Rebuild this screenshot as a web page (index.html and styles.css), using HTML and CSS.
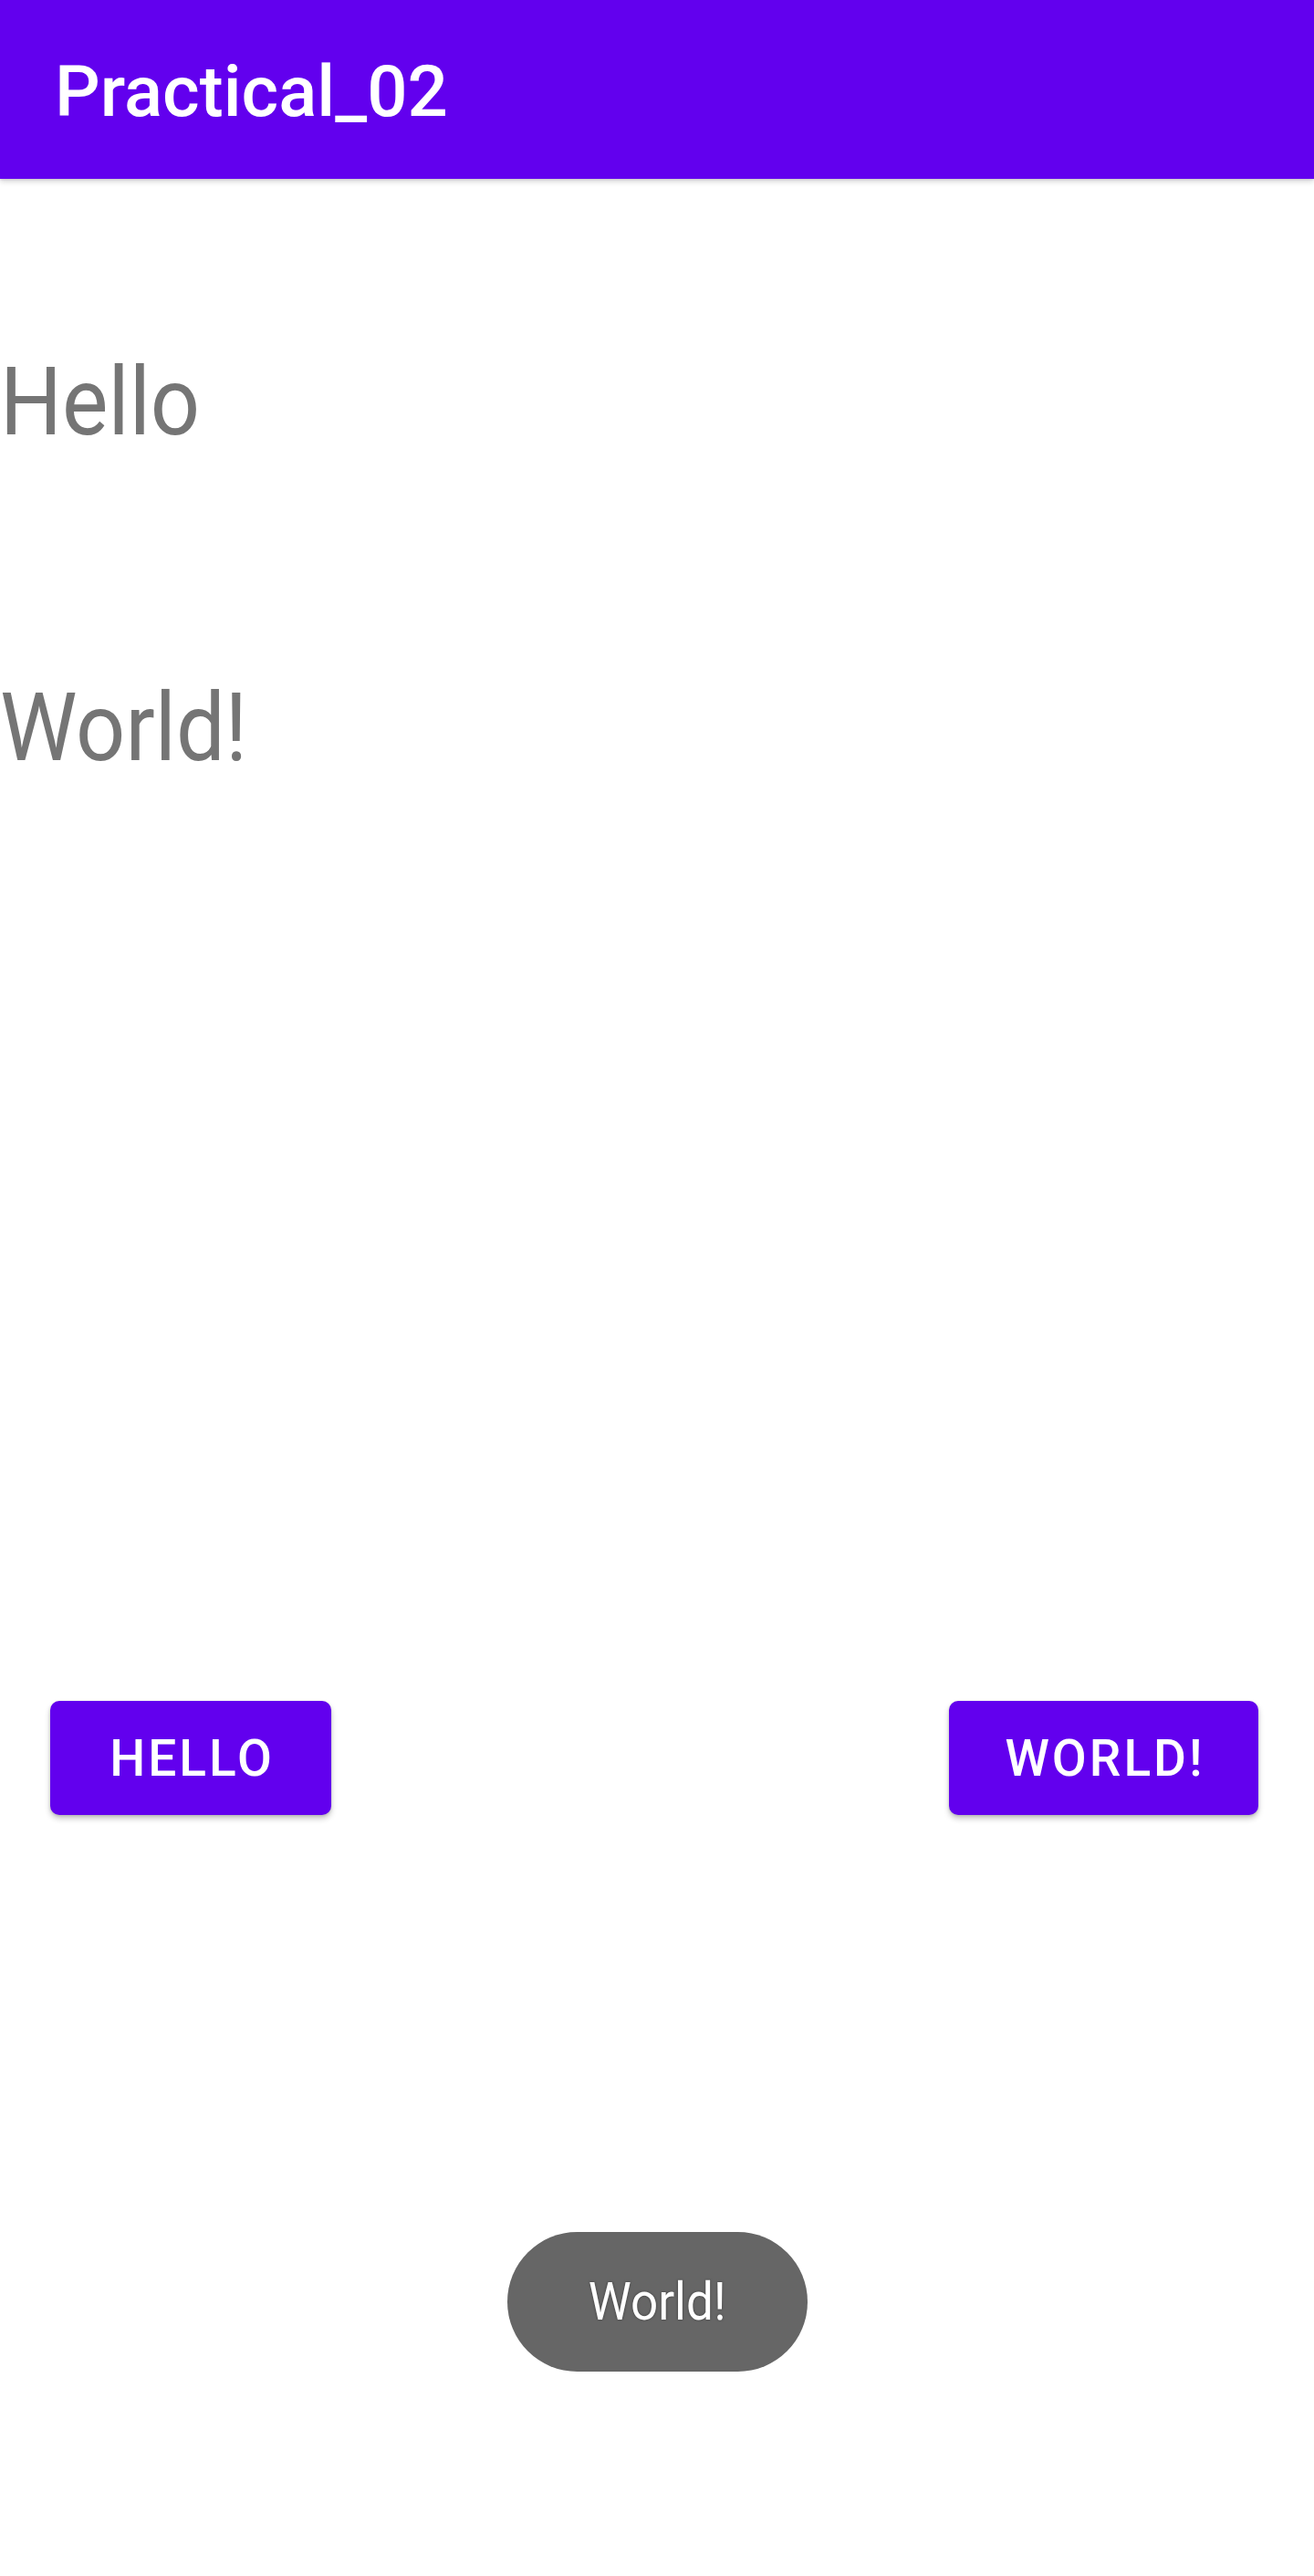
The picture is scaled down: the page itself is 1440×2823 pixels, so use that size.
FILE: index.html
```html
<!DOCTYPE html>
<html>
<head>
<meta charset="utf-8">
<link rel="stylesheet" href="styles.css">
</head>
<body>
<header class="appbar"><span class="title">Practical_02</span></header>
<main class="content">
  <p class="label label-hello"><span class="squeeze">Hello</span></p>
  <p class="label label-world"><span class="squeeze">World!</span></p>
  <div class="buttons">
    <button class="btn btn-hello">Hello</button>
    <button class="btn btn-world">World!</button>
  </div>
  <div class="toast-wrap"><div class="toast"><span class="toast-text">World!</span></div></div>
</main>
</body>
</html>
```
FILE: styles.css
```css
html, body {
  margin: 0;
  padding: 0;
  background: #ffffff;
}
body {
  width: 1440px;
  height: 2823px;
  overflow: hidden;
  font-family: Roboto, "Liberation Sans", sans-serif;
}
.appbar {
  position: relative;
  z-index: 2;
  height: 196px;
  background: #6200ee;
  display: flex;
  align-items: center;
  padding-left: 60px;
  box-shadow: 0 3px 6px rgba(0,0,0,0.16), 0 1px 2px rgba(0,0,0,0.10);
}
.title {
  display: inline-block;
  color: #ffffff;
  font-weight: 500;
  font-size: 78px;
  line-height: 1;
  padding-top: 6px;
}
.content {
  display: flex;
  flex-direction: column;
}
.label {
  margin: 0;
  color: #757575;
  font-size: 103px;
  line-height: 120px;
  font-weight: 400;
}
.squeeze {
  display: inline-block;
  transform: scaleX(0.925);
  transform-origin: left center;
}
.label-hello {
  margin-top: 185px;
}
.label-world {
  margin-top: 237px;
}
.buttons {
  display: flex;
  justify-content: space-between;
  padding: 0 61px 0 55px;
  margin-top: 1006px;
}
.btn {
  height: 125px;
  border: none;
  border-radius: 10px;
  background: #6200ee;
  color: #ffffff;
  font-family: Roboto, "Liberation Sans", sans-serif;
  font-weight: 500;
  font-size: 55px;
  letter-spacing: 3px;
  text-indent: 3px;
  text-transform: uppercase;
  padding: 0;
  text-align: center;
  box-shadow: 0 4px 6px rgba(0,0,0,0.22), 0 1px 3px rgba(0,0,0,0.14);
}
.btn-hello {
  width: 308px;
}
.btn-world {
  width: 339px;
}
.toast-wrap {
  display: flex;
  justify-content: center;
  margin-top: 457px;
}
.toast {
  width: 329px;
  height: 153px;
  border-radius: 77px;
  background: #666666;
  color: #ffffff;
  display: flex;
  align-items: center;
  justify-content: center;
}
.toast-text {
  display: inline-block;
  font-family: Roboto, "Liberation Sans", sans-serif;
  font-size: 57px;
  transform: scaleX(0.93);
  text-shadow: 0 0 3px rgba(0,0,0,0.45);
}
```
